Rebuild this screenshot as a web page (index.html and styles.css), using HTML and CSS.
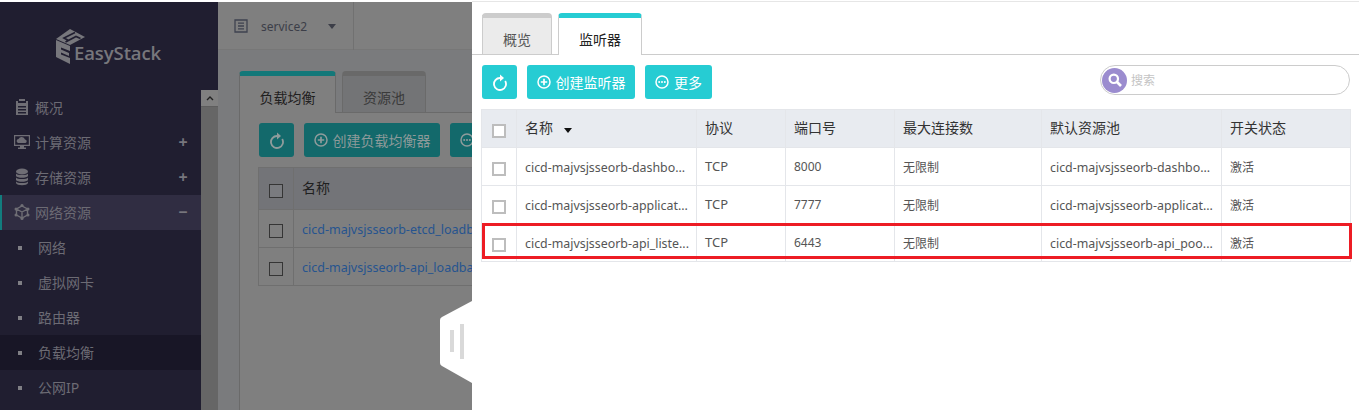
FILE: index.html
```html
<!DOCTYPE html>
<html lang="zh">
<head>
<meta charset="utf-8">
<title>EasyStack</title>
<link rel="stylesheet" href="styles.css">
</head>
<body>
<div class="page">
  <aside class="side">
    <nav class="menu">
      <div class="logo">
        <svg class="logo-mark" width="32" height="36" viewBox="0 0 32 36">
          <path class="lm" d="M1 10 L15 0 L30 8 L15 16 Z"/>
          <path class="lc" d="M20 3.500 L9 9 L13.500 11.500 M10.500 13 L21 7.500 L25.500 9.500" fill="none"/>
          <path class="lm" d="M1 11 L15 17 V22 L6 18.500 V20.500 L14 24 V27 L6 23.500 V25.500 L15 29 V35 L1 28 Z"/>
        </svg>
        <span class="logo-text">EasyStack</span>
      </div>
      <a class="item"><svg class="ico" width="16" height="18" viewBox="0 0 16 18"><path class="ic" d="M5 1h6v2H5zM2 3h2v2h8V3h2v14H2zM4 8v1.500h8V8zM4 11v1.500h8V11zM4 14v1.500h8V14z"/></svg><span>概况</span></a>
      <a class="item"><svg class="ico" width="18" height="16" viewBox="0 0 18 16"><path class="ic" d="M1 1h16v11H11v1.500h2V15H5v-1.500h2V12H1zM2.200 2.200v8.600h13.600V2.200zM5 9a2 2 0 0 1 .5-3.900A3.500 3.500 0 0 1 12 5.500 1.800 1.800 0 0 1 12.500 9z"/></svg><span>计算资源</span><b class="sign">+</b></a>
      <a class="item"><svg class="ico" width="14" height="18" viewBox="0 0 14 18"><ellipse class="ic" cx="7" cy="3.500" rx="6" ry="3"/><path class="ic" d="M1 5.500c1 2 11 2 12 0V8c-1 2.400-11 2.400-12 0zM1 9.500c1 2 11 2 12 0V12c-1 2.400-11 2.400-12 0zM1 13.500c1 2 11 2 12 0V15c-1 2.900-11 2.900-12 0z"/></svg><span>存储资源</span><b class="sign">+</b></a>
      <a class="item on"><svg class="ico" width="16" height="18" viewBox="0 0 16 18"><path class="is" d="M8 3 L13.500 6 V12 L8 15 L2.500 12 V6 Z M2.500 6 L8 9 L13.500 6 M8 9 V15"/><circle class="ic" cx="8" cy="2.500" r="1.600"/><circle class="ic" cx="8" cy="15.500" r="1.600"/><circle class="ic" cx="2" cy="6" r="1.500"/><circle class="ic" cx="14" cy="6" r="1.500"/><circle class="ic" cx="2" cy="12" r="1.500"/><circle class="ic" cx="14" cy="12" r="1.500"/></svg><span>网络资源</span><b class="sign minus">−</b></a>
      <a class="sub"><i></i><span>网络</span></a>
      <a class="sub"><i></i><span>虚拟网卡</span></a>
      <a class="sub"><i></i><span>路由器</span></a>
      <a class="sub cur"><i></i><span>负载均衡</span></a>
      <a class="sub"><i></i><span>公网IP</span></a>
    </nav>
    <div class="sbar"><div class="sup"><svg width="8" height="5" viewBox="0 0 8 5"><path d="M1 4 L4 1 L7 4" fill="none" stroke="#222" stroke-width="1.400"/></svg></div></div>
  </aside>

  <main class="main">
    <header class="top">
      <div class="svc">
        <svg width="14" height="14" viewBox="0 0 14 14"><path d="M1 1h12v12H1zM4 4.200h6M4 7h6M4 9.800h6" fill="none" stroke="#3f4350" stroke-width="1.300"/></svg>
        <span class="svc-name">service2</span>
        <i class="caret"></i>
      </div>
    </header>
    <section class="under">
      <div class="tabs u-tabs">
        <div class="tab u-cur">负载均衡</div>
        <div class="tab u-off">资源池</div>
      </div>
      <div class="u-body">
        <div class="tools u-tools">
          <button class="btn u-btn sq"><svg width="16" height="18" viewBox="0 0 16 18"><path d="M13.200 8A6 6 0 1 1 8 5" fill="none" stroke="#8f9c9c" stroke-width="1.800"/><path d="M8 1.500 L12 5 L8 8.500 Z" fill="#8f9c9c"/></svg></button>
          <button class="btn u-btn"><svg width="14" height="14" viewBox="0 0 14 14"><circle cx="7" cy="7" r="6" fill="none" stroke="#8f9c9c" stroke-width="1.500"/><path d="M7 3.800v6.400M3.800 7h6.400" stroke="#8f9c9c" stroke-width="1.700"/></svg><span>创建负载均衡器</span></button>
          <button class="btn u-btn"><svg width="14" height="14" viewBox="0 0 14 14"><circle cx="7" cy="7" r="6" fill="none" stroke="#8f9c9c" stroke-width="1.500"/><circle cx="4.200" cy="7" r="1" fill="#8f9c9c"/><circle cx="7" cy="7" r="1" fill="#8f9c9c"/><circle cx="9.800" cy="7" r="1" fill="#8f9c9c"/></svg><span>更多</span></button>
        </div>
        <table class="u-table">
          <tr class="u-head"><td class="u-ck"><i class="box u-box"></i></td><td>名称</td></tr>
          <tr><td class="u-ck"><i class="box u-box"></i></td><td class="u-link">cicd-majvsjsseorb-etcd_loadbalancer</td></tr>
          <tr><td class="u-ck"><i class="box u-box"></i></td><td class="u-link">cicd-majvsjsseorb-api_loadbalancer</td></tr>
        </table>
      </div>
    </section>
  </main>

  <section class="drawer">
    <div class="tabs d-tabs">
      <div class="tab d-off">概览</div>
      <div class="tab d-cur">监听器</div>
    </div>
    <div class="d-tools">
      <div class="tools">
        <button class="btn sq"><svg width="16" height="18" viewBox="0 0 16 18"><path d="M13.200 8A6 6 0 1 1 8 5" fill="none" stroke="#fff" stroke-width="1.800"/><path d="M8 1.500 L12 5 L8 8.500 Z" fill="#fff"/></svg></button>
        <button class="btn"><svg width="14" height="14" viewBox="0 0 14 14"><circle cx="7" cy="7" r="6" fill="none" stroke="#fff" stroke-width="1.500"/><path d="M7 3.800v6.400M3.800 7h6.400" stroke="#fff" stroke-width="1.700"/></svg><span>创建监听器</span></button>
        <button class="btn more"><svg width="14" height="14" viewBox="0 0 14 14"><circle cx="7" cy="7" r="6" fill="none" stroke="#fff" stroke-width="1.500"/><circle cx="4.200" cy="7" r="1" fill="#fff"/><circle cx="7" cy="7" r="1" fill="#fff"/><circle cx="9.800" cy="7" r="1" fill="#fff"/></svg><span>更多</span></button>
      </div>
      <div class="search">
        <span class="s-ico"><svg width="16" height="16" viewBox="0 0 16 16"><circle cx="6.800" cy="6.800" r="4.200" fill="none" stroke="#fff" stroke-width="2.200"/><path d="M10 10 L14 14" stroke="#fff" stroke-width="2.600"/></svg></span>
        <span class="s-text">搜索</span>
      </div>
    </div>
    <table class="list">
      <colgroup><col class="c1"><col class="c2"><col class="c3"><col class="c4"><col class="c5"><col class="c6"><col class="c7"></colgroup>
      <thead>
        <tr><th class="ck"><i class="box"></i></th><th>名称<i class="sort"></i></th><th>协议</th><th>端口号</th><th>最大连接数</th><th>默认资源池</th><th>开关状态</th></tr>
      </thead>
      <tbody>
        <tr><td class="ck"><i class="box"></i></td><td class="nm">cicd-majvsjsseorb-dashbo...</td><td class="pr">TCP</td><td class="cn">8000</td><td class="cn">无限制</td><td class="nm">cicd-majvsjsseorb-dashbo...</td><td class="cn">激活</td></tr>
        <tr><td class="ck"><i class="box"></i></td><td class="nm">cicd-majvsjsseorb-applicat...</td><td class="pr">TCP</td><td class="cn">7777</td><td class="cn">无限制</td><td class="nm">cicd-majvsjsseorb-applicat...</td><td class="cn">激活</td></tr>
        <tr><td class="ck"><i class="box"></i></td><td class="nm">cicd-majvsjsseorb-api_liste...</td><td class="pr">TCP</td><td class="cn">6443</td><td class="cn">无限制</td><td class="nm">cicd-majvsjsseorb-api_poo...</td><td class="cn">激活</td></tr>
      </tbody>
    </table>
    <div class="mark"></div>
  </section>

  <svg class="handle" width="32" height="82" viewBox="0 0 32 82">
    <path d="M32 0 L2 16 Q0 17 0 19 V62 Q0 64 2 65 L32 82 Z" fill="#fff"/>
    <rect x="10" y="29" width="4" height="22" fill="#d9d9d9"/>
    <rect x="20" y="23" width="4" height="35" fill="#d9d9d9"/>
  </svg>
</div>
</body>
</html>
```

FILE: styles.css
```css
* { box-sizing: border-box; }
html, body { margin: 0; padding: 0; height: 100%; overflow: hidden; }
body {
  background: #fff;
  font-family: "Noto Sans", "Noto Sans CJK SC", sans-serif;
  font-size: 13px;
}
.page {
  position: relative;
  display: flex;
  height: 410px;
  padding-top: 2px;
  overflow: hidden;
}

/* sidebar */
.side { display: flex; width: 218px; flex: none; background: #201e30; }
.menu { width: 201px; flex: none; }
.logo { height: 88px; display: flex; align-items: flex-start; padding: 26px 0 0 55px; }
.logo-mark { flex: none; margin-top: 1px; }
.lm { fill: #77777c; }
.lc { stroke: #201e30; stroke-width: 1.700; }
.logo-text {
  margin: 14px 0 0 -13px;
  font-family: "Open Sans", sans-serif;
  font-weight: 600;
  font-size: 18.500px;
  line-height: 22px;
  color: #77777c;
  letter-spacing: -.1px;
}
.item, .sub {
  display: flex;
  align-items: center;
  height: 35px;
  padding-bottom: 2px;
  color: #6c6b74;
  font-size: 14px;
}
.item { padding-left: 13px; padding-right: 12px; }
.item span { margin-left: 4px; }
.item.on { background: #302d42; border-left: 2px solid #127d7e; padding-left: 11px; }
.ico { width: 18px; flex: none; }
.ic { fill: #6f6e75; }
.is { fill: none; stroke: #6f6e75; stroke-width: 1.400; }
.sign { margin-left: auto; font-weight: 700; font-size: 16px; color: #77767d; width: 12px; text-align: center; }
.sub { padding-left: 18px; }
.sub i { width: 4px; height: 4px; background: #7f7f84; flex: none; margin-top: 2px; }
.sub span { margin-left: 16px; }
.sub.cur { background: #181626; }
.sbar { width: 17px; flex: none; margin-top: 88px; background: #666; }
.sup { height: 17px; background: #808080; border-bottom: 1px solid #5e5e5e; display: flex; justify-content: center; align-items: center; }

/* dimmed main */
.main { flex: 1; min-width: 0; background: #7a7b7d; display: flex; flex-direction: column; }
.top { height: 48px; background: #7f7f7f; border-bottom: 1px solid #777; flex: none; }
.svc { width: 136px; height: 48px; border-right: 1px solid #717171; display: flex; align-items: center; padding-left: 16px; color: #3c3e48; }
.svc-name { margin-left: 13px; font-size: 12px; }
.caret { margin-left: 21px; border: 4px solid transparent; border-top: 5px solid #3c3e48; border-bottom: 0; }
.under { flex: 1; padding: 21px 0 0 21px; }
.tabs { display: flex; align-items: flex-end; }
.tab { text-align: center; font-size: 14px; border-radius: 4px 4px 0 0; }
.u-tabs { height: 42px; gap: 6px; border-bottom: 1px solid #6a6a6a; }
.u-cur { width: 97px; height: 42px; border: 1px solid #6a6a6a; border-top: 5px solid #137879; border-bottom: 0; background: #7f7f7f; color: #1f2020; line-height: 44px; margin-bottom: -1px; }
.u-off { width: 84px; height: 41px; border: 1px solid #6a6a6a; border-top: 5px solid #696969; border-bottom: 0; background: #737476; color: #3a3a3a; line-height: 44px; }
.u-body { height: 400px; border-left: 1px solid #6a6a6a; background: #7f7f7f; padding: 10px 0 0 19px; }
.tools { display: flex; gap: 10px; }
.btn {
  display: flex; align-items: center; justify-content: center; gap: 5px;
  height: 34px; padding: 0 9.500px;
  border: 0; border-radius: 3px;
  background: #26ccd3; color: #fff;
  font: inherit; font-size: 14px;
}
.btn.sq { width: 35px; padding: 0; }
.btn.more { width: 67px; }
.u-btn { background: #13696b; color: #8d9a9a; }
.u-table { margin: 10px 0 0 -1px; width: 500px; border-collapse: collapse; color: #1f2020; font-size: 14px; }
.u-table td { border: 1px solid #6f6f6f; padding: 0 8px; height: 38px; }
.u-table .u-head td { height: 42px; background: #737478; padding-bottom: 3px; }
.u-table .u-ck { width: 35px; padding: 0; text-align: center; }
.u-table .u-head .u-ck { padding: 0; }
.u-table .u-link { color: #26548f; white-space: nowrap; font-size: 12.500px; padding-top: 2px; }
.box { display: inline-block; width: 14px; height: 14px; margin: 1px 0 0 -1px; background: #fff; border: 2px solid #bdbdbd; vertical-align: middle; }
.u-box { background: #7f7f7f; border: 1px solid #353535; margin-top: 2px; }
.u-head .u-box { background: #7a7b7f; }

/* drawer */
.drawer {
  position: absolute; left: 472px; top: 1px; right: 0; bottom: 0;
  background: #fff; border-top: 1px solid #e6e6e6;
}
.d-tabs { height: 53px; padding: 11px 0 0 10px; gap: 6px; border-bottom: 1px solid #ccc; }
.d-off { width: 70px; height: 41px; border: 1px solid #ccc; border-top: 5px solid #ccc; border-bottom: 0; background: #ebebeb; color: #555; line-height: 43px; }
.d-cur { width: 84px; height: 42px; border: 1px solid #ccc; border-top: 5px solid #26ccd3; border-bottom: 0; background: #fff; color: #222; line-height: 43px; margin-bottom: -1px; }
.d-tools { display: flex; justify-content: space-between; padding: 10px 9px 0 10px; height: 54px; }
.search { width: 250px; height: 30px; border: 1px solid #ccc; border-radius: 15px; display: flex; align-items: center; padding-left: 1px; }
.s-ico { width: 25px; height: 25px; border-radius: 50%; background: #9b8ccf; display: flex; align-items: center; justify-content: center; }
.s-text { margin-left: 4px; color: #c4c4c4; font-size: 12px; }
.list { margin-left: 9px; width: 869px; table-layout: fixed; border-collapse: collapse; color: #555; font-size: 13px; }
.c1 { width: 35px; } .c2 { width: 180px; } .c3 { width: 89px; } .c4 { width: 109px; } .c5 { width: 147px; } .c6 { width: 180px; } .c7 { width: 129px; }
.list th, .list td { border: 1px solid #e4e6ea; padding: 0 8px; height: 38px; text-align: left; white-space: nowrap; overflow: hidden; }
.list th { background: #e8ebf0; color: #333; font-weight: 400; font-size: 14px; padding-bottom: 3px; }
.list .nm { font-size: 12.400px; padding-top: 2px; }
.list .cn { font-size: 12px; }
.list .pr { padding-bottom: 2px; }
.list .ck { padding: 0; text-align: center; }
.sort { display: inline-block; margin: 3px 0 0 11px; border: 4.500px solid transparent; border-top: 5px solid #111; border-bottom: 0; vertical-align: middle; }
.mark { position: absolute; left: 10px; top: 221px; width: 870px; height: 36px; border: 3px solid #ed1c24; pointer-events: none; }
.handle { position: absolute; left: 440px; top: 301px; }
```
